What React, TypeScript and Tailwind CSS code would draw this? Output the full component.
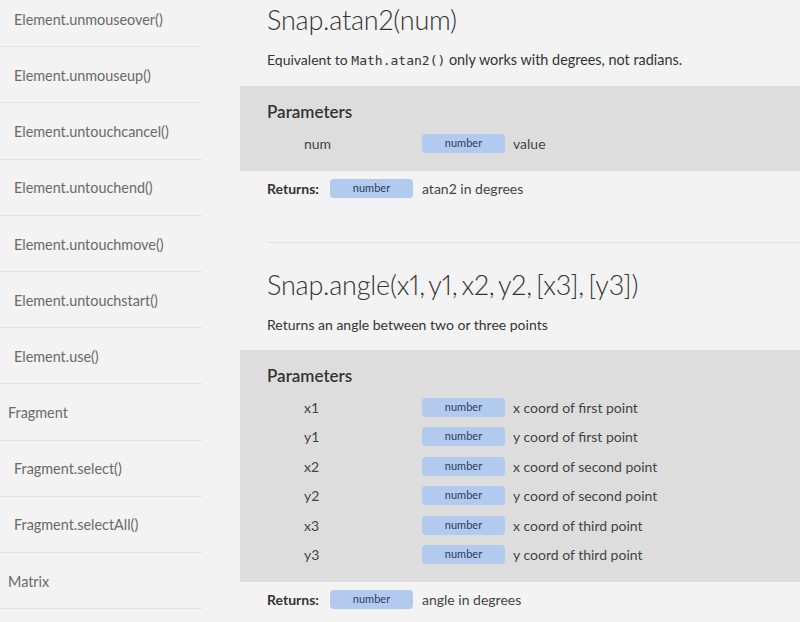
import React from "react";

const sidebar: { label: string; indent: boolean }[] = [
  { label: "Element.unmouseover()", indent: true },
  { label: "Element.unmouseup()", indent: true },
  { label: "Element.untouchcancel()", indent: true },
  { label: "Element.untouchend()", indent: true },
  { label: "Element.untouchmove()", indent: true },
  { label: "Element.untouchstart()", indent: true },
  { label: "Element.use()", indent: true },
  { label: "Fragment", indent: false },
  { label: "Fragment.select()", indent: true },
  { label: "Fragment.selectAll()", indent: true },
  { label: "Matrix", indent: false },
];

const font = { fontFamily: "Lato, 'Open Sans', sans-serif" };

function Badge() {
  return (
    <span className="inline-flex w-[83px] h-[19px] items-center justify-center rounded-[4px] bg-[#b1caee] text-[11px] text-[#2b3d5e] leading-none pb-[2px]">
      number
    </span>
  );
}

function ParamRow({ name, desc }: { name: string; desc: string }) {
  return (
    <div className="flex items-center h-[29.5px]">
      <span className="w-[155px] pl-[37px] text-[14px] text-[#444]">{name}</span>
      <Badge />
      <span className="ml-[8px] text-[14px] text-[#444]">{desc}</span>
    </div>
  );
}

function Section({
  title,
  desc,
  params,
  returns,
  first,
}: {
  title: string;
  desc: React.ReactNode;
  params: [string, string][];
  returns: string;
  first?: boolean;
}) {
  return (
    <section>
      <h2
        className={`${first ? "mt-[4px]" : "mt-[26px]"} pl-[27px] text-[27px] leading-[32px] font-light text-[#333] proportional-nums tracking-[-0.2px] [word-spacing:-3px]`}
      >
        {title}
      </h2>
      <p className="mt-[14px] pl-[27px] text-[14px] leading-[20px] text-[#333]">{desc}</p>
      <div className="mt-[15px] bg-[#dddddd] pl-[27px] pt-[14px] pb-[12px]">
        <h3 className="text-[17px] leading-[24px] font-semibold text-[#333]">Parameters</h3>
        <div className="mt-[5px]">
          {params.map(([n, d]) => (
            <ParamRow key={n} name={n} desc={d} />
          ))}
        </div>
      </div>
      <div className="mt-[6px] h-[24px] pl-[27px] flex items-center">
        <span className="text-[14px] font-bold text-[#333] w-[63px]">Returns:</span>
        <Badge />
        <span className="ml-[9px] text-[14px] text-[#444]">{returns}</span>
      </div>
    </section>
  );
}

export default function App() {
  return (
    <div className="flex w-[800px] h-[622px] overflow-hidden bg-[#f3f3f3]" style={font}>
      <aside className="w-[240px] shrink-0">
        <ul className="w-[202px] mt-[-9px]">
          {sidebar.map((s) => (
            <li
              key={s.label}
              className={`h-[56.2px] flex items-center border-b border-[#e4e4e4] text-[14.4px] text-[#6a6a6a] ${
                s.indent ? "pl-[14px]" : "pl-[8px]"
              }`}
            >
              <span className="mt-[2px]">{s.label}</span>
            </li>
          ))}
        </ul>
      </aside>
      <main className="flex-1 min-w-0">
        <Section
          first
          title="Snap.atan2(num)"
          desc={
            <>
              Equivalent to{" "}
              <code className="text-[13px]" style={{ fontFamily: "'DejaVu Sans Mono', monospace" }}>
                Math.atan2()
              </code>{" "}
              <span className="text-[14.4px]">only works with degrees, not radians.</span>
            </>
          }
          params={[["num", "value"]]}
          returns="atan2 in degrees"
        />
        <div className="mt-[41px] ml-[27px] h-px bg-[#e2e2e2]" />
        <Section
          title="Snap.angle(x1, y1, x2, y2, [x3], [y3])"
          desc="Returns an angle between two or three points"
          params={[
            ["x1", "x coord of first point"],
            ["y1", "y coord of first point"],
            ["x2", "x coord of second point"],
            ["y2", "y coord of second point"],
            ["x3", "x coord of third point"],
            ["y3", "y coord of third point"],
          ]}
          returns="angle in degrees"
        />
      </main>
    </div>
  );
}
